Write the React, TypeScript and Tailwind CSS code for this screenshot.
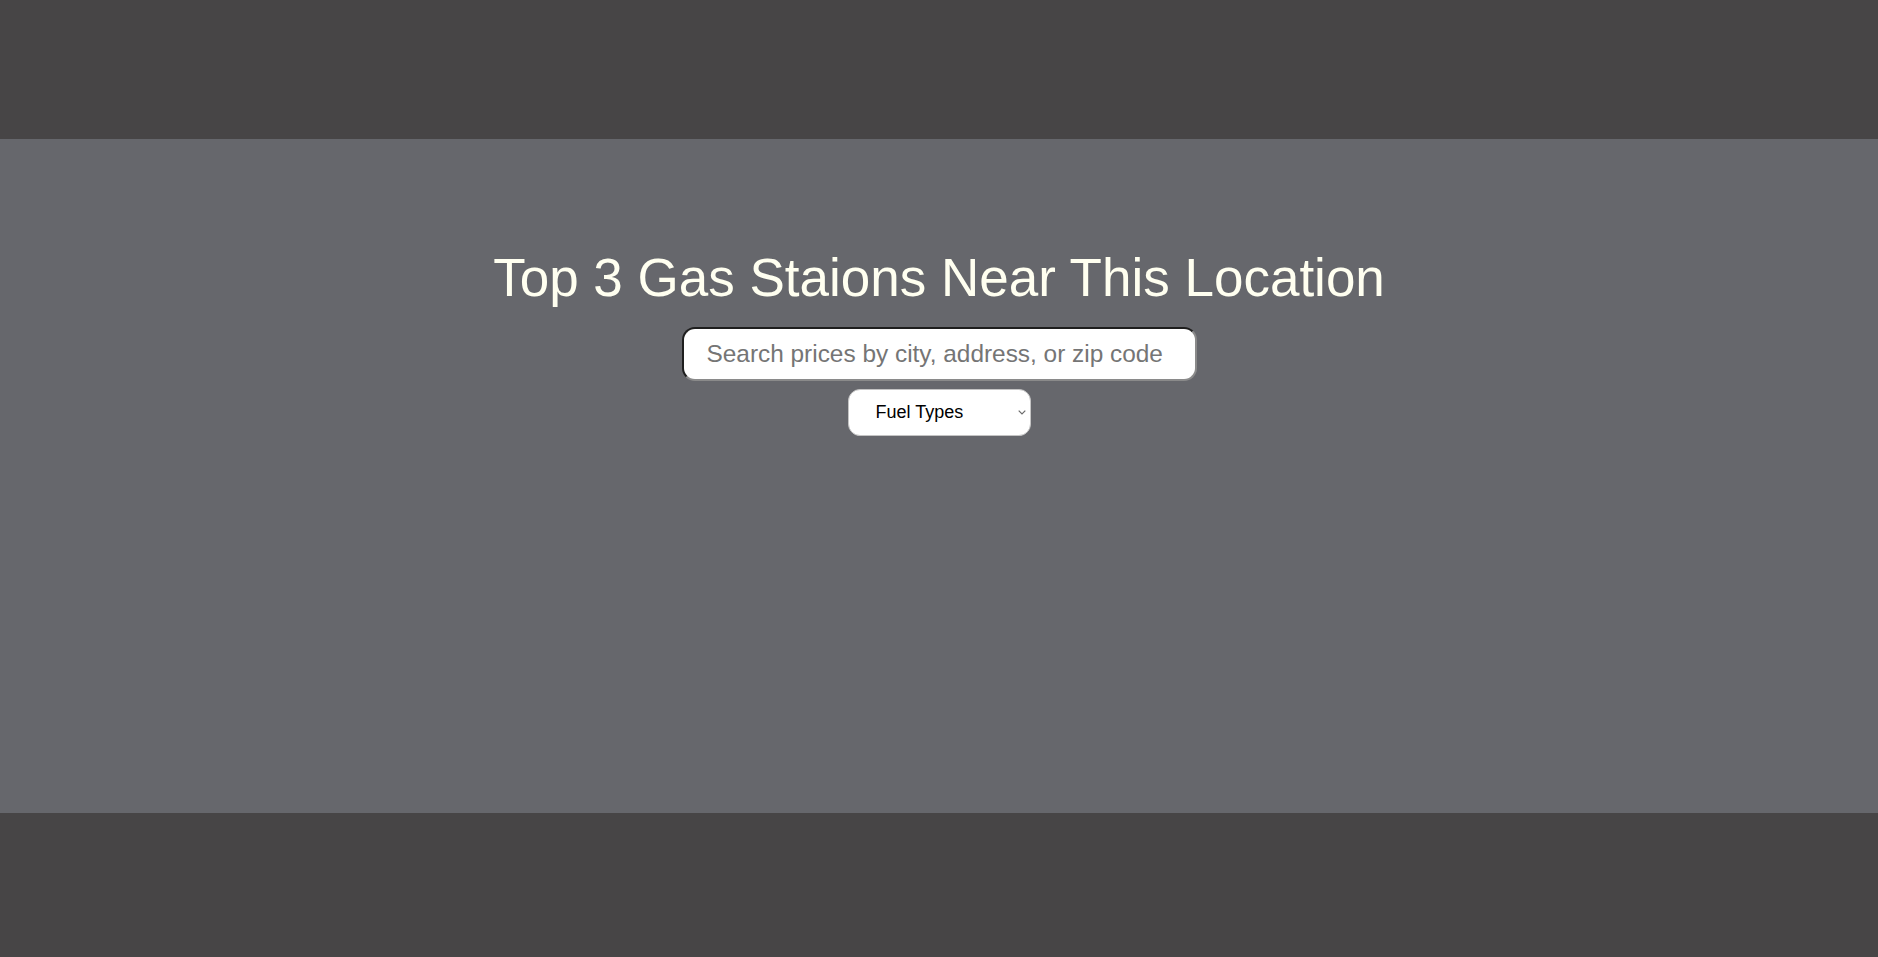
export default function App() {
  return (
    <div className="min-h-screen w-full font-['Liberation_Sans',Arial,sans-serif]">
      <header className="h-[139px] bg-[#474546]"></header>

      <main className="h-[674px] bg-[#66676c] flex flex-col items-center pt-[108px]">
        <h1 className="text-[53px] leading-[61px] text-[#fffff0]">Top 3 Gas Staions Near This Location</h1>

        <input
          type="text"
          placeholder="Search prices by city, address, or zip code"
          className="mt-[19px] w-[515px] h-[54px] pl-[23px] pr-[22px] text-[24.4px] bg-white rounded-[13px] border-2 border-t-[#1e1e1e] border-l-[#1e1e1e] border-r-[#8a8a8a] border-b-[#8a8a8a] placeholder:text-[#757575] text-black outline-none"
        />

        <div className="relative mt-2">
          <select
            defaultValue=""
            className="appearance-none w-[183px] h-[47px] pl-[27px] pr-4 text-[18px] text-black bg-white rounded-[12px] border border-[#c4c4c4] outline-none"
          >
            <option value="" disabled>Fuel Types</option>
            <option value="regular">Regular</option>
            <option value="midgrade">Midgrade</option>
            <option value="premium">Premium</option>
            <option value="diesel">Diesel</option>
          </select>
          <svg
            className="pointer-events-none absolute right-[5px] top-[21px]"
            width="8"
            height="5"
            viewBox="0 0 8 5"
            fill="none"
          >
            <path d="M0.7 0.7 L4 4 L7.3 0.7" stroke="#6b6b6b" strokeWidth="1.2" />
          </svg>
        </div>
      </main>

      <footer className="h-[144px] bg-[#474546]"></footer>
    </div>
  );
}
